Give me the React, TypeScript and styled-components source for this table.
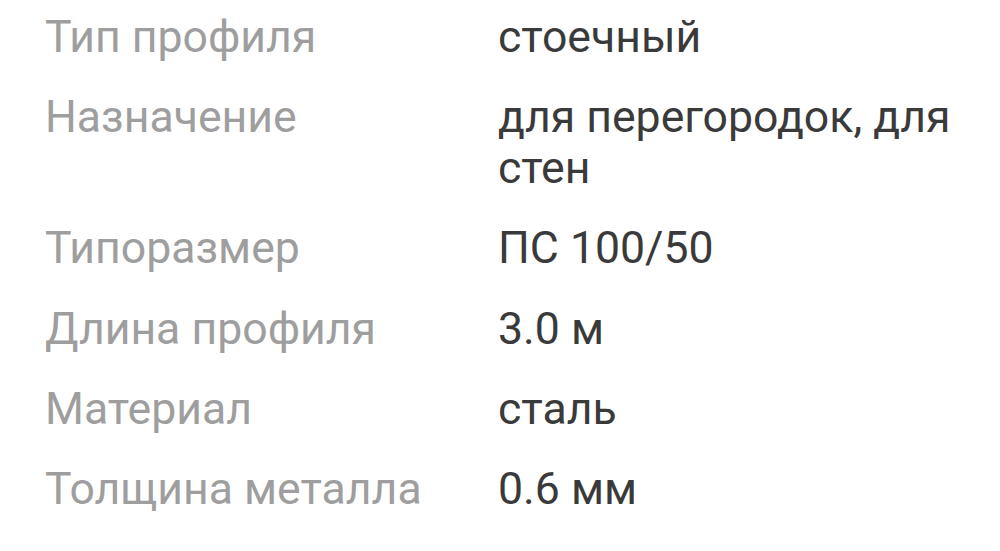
import { createGlobalStyle } from "styled-components";
import styled from "styled-components";

const GlobalStyle = createGlobalStyle`
  body {
    margin: 0;
    background: #ffffff;
    font-family: Roboto, "Noto Sans", sans-serif;
  }
`;

const SList = styled.dl`
  margin: 0;
  padding: 12px 40px 0 45px;
  display: grid;
  grid-template-columns: 453px 1fr;
  row-gap: 29.2px;
  font-size: 44.6px;
  line-height: 51px;
`;

const SLabel = styled.dt`
  color: #9e9e9e;
`;

const SValue = styled.dd`
  margin: 0;
  color: #3a3a3a;
`;

const specs = [
  { label: "Тип профиля", value: "стоечный" },
  { label: "Назначение", value: "для перегородок, для стен" },
  { label: "Типоразмер", value: "ПС 100/50" },
  { label: "Длина профиля", value: "3.0 м" },
  { label: "Материал", value: "сталь" },
  { label: "Толщина металла", value: "0.6 мм" },
];

const App = () => {
  return (
    <>
      <GlobalStyle />
      <SList>
        {specs.map((s, i) => (
          <>
            <SLabel key={"l" + i}>{s.label}</SLabel>
            <SValue key={"v" + i}>{s.value}</SValue>
          </>
        ))}
      </SList>
    </>
  );
};

export default App;
